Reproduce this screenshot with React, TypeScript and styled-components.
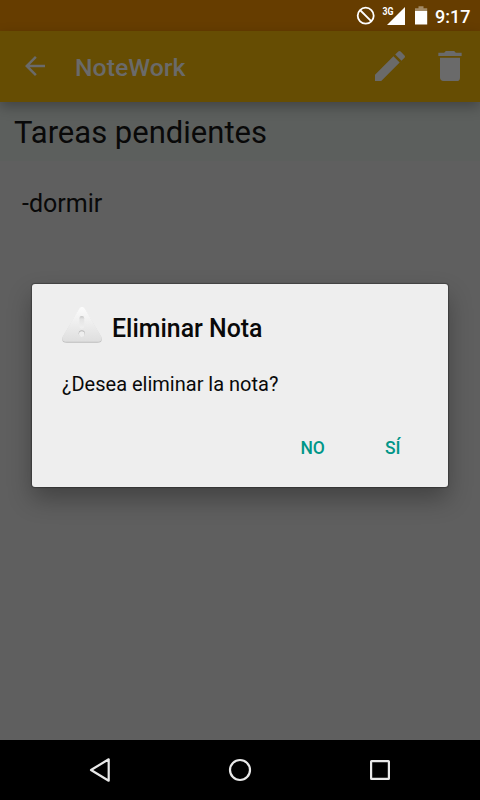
import React from 'react';
import styled, { createGlobalStyle } from 'styled-components';

const GlobalStyle = createGlobalStyle`
  * { box-sizing: border-box; }
  body { margin: 0; background: #5f5f5f; font-family: Roboto, sans-serif; }
`;

const Screen = styled.div`
  position: relative;
  display: flex;
  flex-direction: column;
  width: 480px;
  height: 800px;
  overflow: hidden;
  background: #5f5f5f;
  color: #090909;
`;

const StatusBar = styled.header`
  display: flex;
  flex: none;
  justify-content: flex-end;
  height: 31px;
  background: #663d00;
`;

const StatusIcons = styled.svg`
  display: block;
  width: 80px;
  height: 31px;
`;

const Clock = styled.time`
  width: 45px;
  font-size: 18px;
  font-weight: 500;
  line-height: 33px;
  color: #fff;
  white-space: nowrap;
`;

const AppBar = styled.nav`
  position: relative;
  z-index: 1;
  display: flex;
  flex: none;
  align-items: center;
  height: 71px;
  padding: 0 10px 1px 20px;
  background: #664d03;
  color: #6a6a6a;
  box-shadow: 0 5px 12px rgba(0, 0, 0, 0.28);
`;

const AppTitle = styled.h1`
  flex: 1;
  margin: 0 0 0 25px;
  padding-top: 3px;
  font-size: 24.8px;
  font-weight: 500;
  line-height: 30px;
`;

const BarButton = styled.button<{ $size: number; $gap?: number }>`
  width: ${({ $size }) => $size}px;
  height: ${({ $size }) => $size}px;
  margin: 0 0 0 ${({ $gap = 0 }) => $gap}px;
  padding: 0;
  border: 0;
  background: none;
  color: inherit;

  svg { display: block; width: 100%; height: 100%; fill: currentColor; }
`;

const NoteTitle = styled.h2`
  flex: none;
  height: 59px;
  margin: 0;
  padding: 10px 14px 0;
  background: #5c5f5d;
  font-size: 31px;
  font-weight: 400;
  line-height: 42px;
`;

const NoteBody = styled.p`
  flex: 1;
  margin: 0;
  padding: 28px 22px;
  font-size: 25px;
  line-height: 30px;
`;

const Dialog = styled.section`
  position: absolute;
  top: 284px;
  left: 32px;
  z-index: 2;
  width: 416px;
  height: 203px;
  padding: 23px 30px 0;
  border-radius: 3px;
  background: #eeeeee;
  box-shadow: 0 0 1px 1px rgba(0, 0, 0, 0.28), 0 12px 24px rgba(0, 0, 0, 0.3);
`;

const DialogHeading = styled.div`
  display: flex;
  height: 40px;
`;

const AlertIcon = styled.svg`
  flex: none;
  width: 40px;
  height: 40px;
`;

const DialogTitle = styled.h3`
  margin: 0 0 0 10px;
  padding-top: 7px;
  font-size: 24.9px;
  font-weight: 500;
  line-height: 30px;
`;

const DialogMessage = styled.p`
  margin: 25px 0 0;
  font-size: 20px;
  line-height: 24px;
`;

const Actions = styled.div`
  display: flex;
  justify-content: flex-end;
  margin: 41px 17.5px 0 0;
  gap: 60px;
`;

const Action = styled.button`
  padding: 0;
  border: 0;
  background: none;
  color: #009688;
  font: 500 17.5px/22px Roboto, sans-serif;
`;

const NavigationBar = styled.footer`
  display: flex;
  flex: none;
  align-items: center;
  justify-content: center;
  gap: 100px;
  height: 60px;
  background: #000;

  svg { width: 40px; height: 40px; fill: none; stroke: #e9e9e9; stroke-width: 2.2; }
`;

export default function App() {
  return (
    <>
      <GlobalStyle />
      <Screen>
        <StatusBar>
          <StatusIcons viewBox="355 0 80 31">
            <g fill="none" stroke="#fff" strokeWidth="1.8">
              <circle cx="365.7" cy="15.7" r="8" />
              <path d="M360 10l11.4 11.4" />
            </g>
            <text x="382.5" y="15" fill="#fff" fontFamily="Roboto" fontSize="10.5" fontWeight="700" textLength="11" lengthAdjust="spacingAndGlyphs">3G</text>
            <path fill="#fff" d="M405 7v18h-18zM415 11h12.2v13.5H415z" />
            <path fill="#a38a66" d="M418.5 6.3h5v2h3.7V11H415V8.3h3.5z" />
          </StatusIcons>
          <Clock>9:17</Clock>
        </StatusBar>
        <AppBar>
          <BarButton $size={30} aria-label="Atrás">
            <svg viewBox="0 0 24 24"><path d="M20 11H7.83l5.59-5.59L12 4l-8 8 8 8 1.41-1.41L7.83 13H20v-2z" /></svg>
          </BarButton>
          <AppTitle>NoteWork</AppTitle>
          <BarButton $size={40} aria-label="Editar">
            <svg viewBox="0 0 24 24"><path d="M3 17.25V21h3.75L17.81 9.94l-3.75-3.75L3 17.25zM20.71 7.04a1 1 0 0 0 0-1.41l-2.34-2.34a1 1 0 0 0-1.41 0l-1.83 1.83 3.75 3.75 1.83-1.83z" /></svg>
          </BarButton>
          <BarButton $size={40} $gap={20} aria-label="Eliminar">
            <svg viewBox="0 0 24 24"><path d="M6 19c0 1.1.9 2 2 2h8a2 2 0 0 0 2-2V7H6v12zM19 4h-3.5l-1-1h-5l-1 1H5v2h14V4z" /></svg>
          </BarButton>
        </AppBar>
        <NoteTitle>Tareas pendientes</NoteTitle>
        <NoteBody>-dormir</NoteBody>
        <NavigationBar>
          <svg viewBox="0 0 40 40"><path d="M28.7 9.3v21.4L11 20z" strokeLinejoin="round" /></svg>
          <svg viewBox="0 0 40 40"><circle cx="20" cy="20" r="10" /></svg>
          <svg viewBox="0 0 40 40"><rect x="11.1" y="11.1" width="17.8" height="17.8" rx=".4" /></svg>
        </NavigationBar>
        <Dialog role="dialog" aria-label="Eliminar Nota">
          <DialogHeading>
            <AlertIcon viewBox="0 0 40 40">
              <defs>
                <linearGradient id="alertFill" x1="0" y1="0" x2="0" y2="1">
                  <stop stopColor="#fcfcfc" />
                  <stop offset="1" stopColor="#dedede" />
                </linearGradient>
                <linearGradient id="markFill" x1="0" y1="0" x2="0" y2="1">
                  <stop stopColor="#c4c4c4" />
                  <stop offset=".25" stopColor="#e4e4e4" />
                  <stop offset="1" stopColor="#f0f0f0" />
                </linearGradient>
              </defs>
              <path fill="#bdbdbd" d="M17 2.5q3-4.8 6 0L39.2 30q2 5.8-4 5.8H4.8q-6 0-4-5.8z" />
              <path fill="url(#alertFill)" d="M17 1.7q3-4.2 6 0L39.2 29.2q2 5.6-4 5.6H4.8q-6 0-4-5.6z" />
              <rect x="17.4" y="9" width="4.8" height="12.5" rx="2.2" fill="url(#markFill)" />
              <circle cx="19.8" cy="26.3" r="3.1" fill="#b8b8b8" />
              <circle cx="19.8" cy="27.1" r="2.8" fill="#eeeeee" />
            </AlertIcon>
            <DialogTitle>Eliminar Nota</DialogTitle>
          </DialogHeading>
          <DialogMessage>¿Desea eliminar la nota?</DialogMessage>
          <Actions>
            <Action>NO</Action>
            <Action>SÍ</Action>
          </Actions>
        </Dialog>
      </Screen>
    </>
  );
}
